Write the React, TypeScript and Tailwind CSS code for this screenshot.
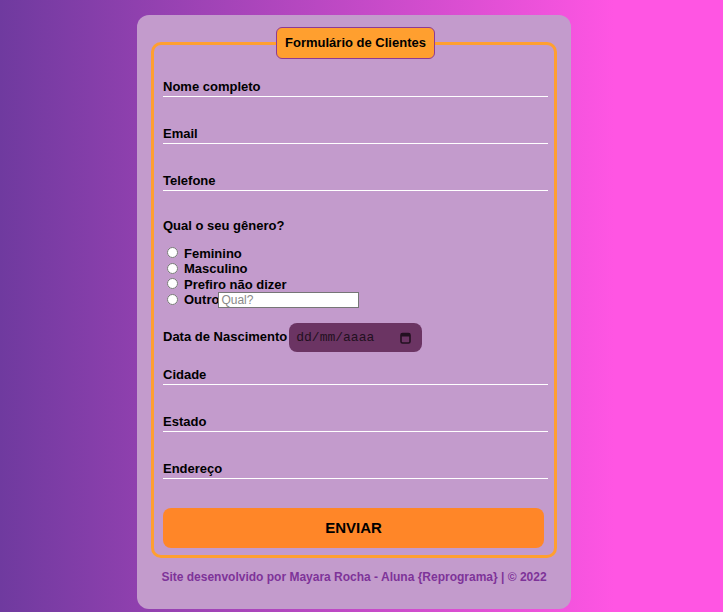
import React from "react";

function Field({ label }: { label: string }) {
  return (
    <label className="block leading-4 pb-px border-b border-white text-[13px] font-bold text-black">
      {label}
    </label>
  );
}

function Radio({ label, children }: { label: string; children?: React.ReactNode }) {
  return (
    <div className="flex items-center h-[15.5px]">
      <input type="radio" name="genero" className="ml-[4px] mr-[6px] mb-[2px] w-[11px] h-[11px] accent-white" />
      <span className="text-[13px] font-bold text-black leading-4">{label}</span>
      {children}
    </div>
  );
}

export default function App() {
  return (
    <main
      className="min-h-[612px] w-full flex justify-center pt-[15px] pr-[15px] font-['Liberation_Sans',Arial,sans-serif]"
      style={{ background: "linear-gradient(to right, #6f3a9f 0%, #ff55e3 85%, #ff55e3 100%)" }}
    >
      <div className="w-[434px] h-[594px] bg-[#c39bcc] rounded-xl px-[14px] pt-[12px]">
        <fieldset className="border-[3px] border-[#ff9f2f] rounded-[10px] pl-[9px] pr-[6px] pb-[7px]">
          <legend className="mx-auto px-[8px] h-[32px] flex items-center bg-[#ff9f2f] border border-[#8e3a94] rounded-md text-[13px] font-bold text-black">
            Formulário de Clientes
          </legend>

          <div className="mt-[20px]">
            <Field label="Nome completo" />
          </div>
          <div className="mt-[29px]">
            <Field label="Email" />
          </div>
          <div className="mt-[29px]">
            <Field label="Telefone" />
          </div>

          {/* Gênero */}
          <p className="mt-[27px] leading-4 text-[13px] font-bold text-black">Qual o seu gênero?</p>
          <div className="mt-[12px] flex flex-col">
            <Radio label="Feminino" />
            <Radio label="Masculino" />
            <Radio label="Prefiro não dizer" />
            <Radio label="Outro">
              <input
                type="text"
                placeholder="Qual?"
                className="-ml-[1px] w-[141px] h-[16px] bg-white border border-[#767676] px-[2px] text-[12px] text-black placeholder:text-[#8a8a8a] outline-none"
              />
            </Radio>
          </div>

          {/* Data */}
          <div className="mt-[15px] flex items-center gap-[2px]">
            <span className="text-[13px] font-bold text-black leading-4 -mt-[2px]">Data de Nascimento</span>
            <div className="w-[133px] h-[29px] rounded-lg bg-[#6b3463] flex items-center justify-between pl-[7px] pr-[11px]">
              <span className="font-['Liberation_Mono',monospace] text-[13px] text-[#221020]">dd/mm/aaaa</span>
              <svg width="11" height="12" viewBox="0 0 11 12">
                <rect x="1" y="1.5" width="9" height="9.5" rx="1.5" fill="none" stroke="#221020" strokeWidth="1.6" />
                <rect x="1" y="1.5" width="9" height="3" fill="#221020" />
              </svg>
            </div>
          </div>

          <div className="mt-[15px]">
            <Field label="Cidade" />
          </div>
          <div className="mt-[29px]">
            <Field label="Estado" />
          </div>
          <div className="mt-[29px]">
            <Field label="Endereço" />
          </div>

          <button className="mt-[29px] w-[381px] h-[40px] rounded-lg bg-[#ff8628] text-[15px] font-bold text-black">
            ENVIAR
          </button>
        </fieldset>

        <p className="mt-[12px] text-center leading-[14px] text-[12px] font-bold text-[#7e3399]">
          Site desenvolvido por Mayara Rocha - Aluna {"{Reprograma}"} | © 2022
        </p>
      </div>
    </main>
  );
}
